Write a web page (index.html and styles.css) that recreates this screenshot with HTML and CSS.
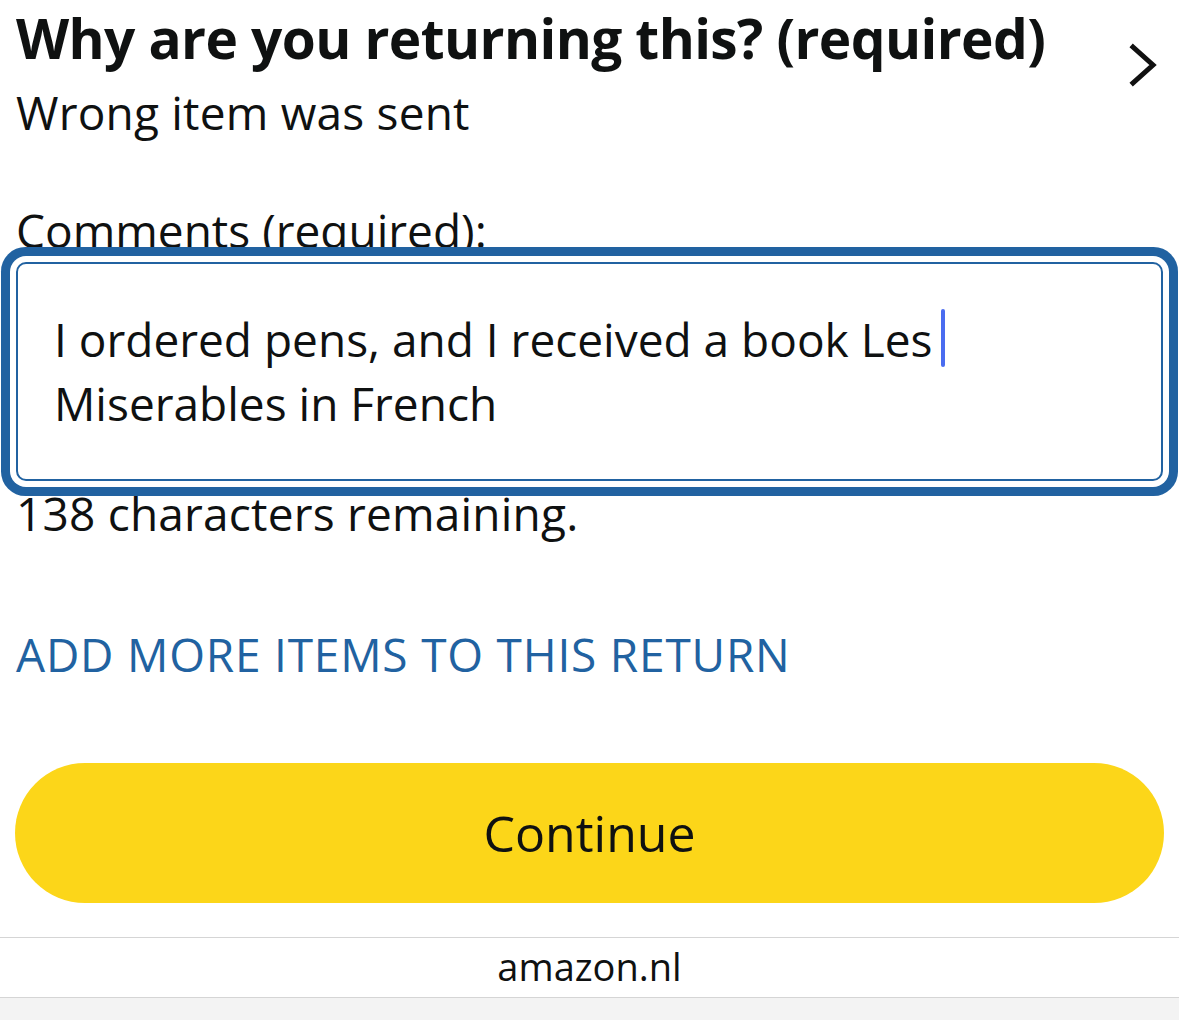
FILE: index.html
```html
<!DOCTYPE html>
<html lang="en">
<head>
<meta charset="utf-8">
<title>Return reason</title>
<link rel="stylesheet" href="styles.css">
</head>
<body>
<main class="page">
  <section class="reason">
    <div class="reason-text">
      <h1 class="title">Why are you returning this? (required)</h1>
      <p class="value">Wrong item was sent</p>
    </div>
    <svg class="chevron" width="34" height="46" viewBox="0 0 34 46" aria-hidden="true">
      <path d="M6 5 L26 23 L6 41" fill="none" stroke="#111" stroke-width="5" stroke-linecap="square" stroke-linejoin="miter"/>
    </svg>
  </section>

  <label class="label">Comments (required):</label>
  <div class="field">
    <div class="field-text">I ordered pens, and I received a book Les<span class="caret"></span><br>Miserables in French</div>
  </div>
  <p class="remaining">138 characters remaining.</p>

  <a class="add-link" href="#">ADD MORE ITEMS TO THIS RETURN</a>

  <button class="continue" type="button">Continue</button>
</main>
<footer class="footer">
  <div class="domain">amazon.nl</div>
</footer>
<div class="toolbar"></div>
</body>
</html>
```

FILE: styles.css
```css
html, body {
  margin: 0;
  padding: 0;
  background: #fff;
}

body {
  font-family: "Open Sans", "Noto Sans", sans-serif;
  color: #0f1111;
}

.page {
  padding: 0 16px;
  display: flex;
  flex-direction: column;
}

.reason {
  display: flex;
  justify-content: space-between;
  align-items: flex-start;
  gap: 12px;
}

.reason-text {
  flex: 1;
  min-width: 0;
}

.title {
  margin: 0;
  font-size: 55px;
  line-height: 76px;
  font-weight: 700;
  letter-spacing: -0.6px;
  white-space: nowrap;
}

.value {
  margin: 4px 0 0;
  font-size: 46px;
  line-height: 64px;
  letter-spacing: 0.2px;
}

.chevron {
  margin-top: 42px;
  margin-right: 2px;
  flex: none;
}

.label {
  display: block;
  margin-top: 54px;
  font-size: 46px;
  line-height: 64px;
}

.field {
  position: relative;
  border: 2px solid #2162a1;
  border-radius: 10px;
  box-shadow: 0 0 0 6px #fff, 0 0 0 15px #2162a1;
  padding: 43px 36px 44px;
  background: #fff;
}

.field-text {
  font-size: 46px;
  line-height: 64px;
}

.caret {
  display: inline-block;
  width: 4px;
  height: 58px;
  margin-left: 9px;
  border-radius: 2px;
  background: #4a6cf0;
  vertical-align: -10px;
}

.remaining {
  margin: 0;
  font-size: 46px;
  line-height: 64px;
  letter-spacing: 0.2px;
}

.add-link {
  margin-top: 77px;
  font-size: 46px;
  line-height: 64px;
  letter-spacing: 0.8px;
  color: #2162a1;
  text-decoration: none;
}

.continue {
  margin: 77px -1px 0;
  height: 140px;
  border: none;
  border-radius: 70px;
  background: #fcd619;
  font-family: inherit;
  font-size: 50px;
  color: #0f1111;
  cursor: pointer;
}

.footer {
  margin-top: 34px;
  border-top: 1px solid #d5d5d5;
  border-bottom: 1px solid #d5d5d5;
  height: 59px;
  display: flex;
  align-items: center;
  justify-content: center;
}

.domain {
  font-size: 38px;
  line-height: 50px;
  color: #0f1111;
  margin-top: -4px;
}

.toolbar {
  height: 40px;
  background: #f3f3f3;
}
```
